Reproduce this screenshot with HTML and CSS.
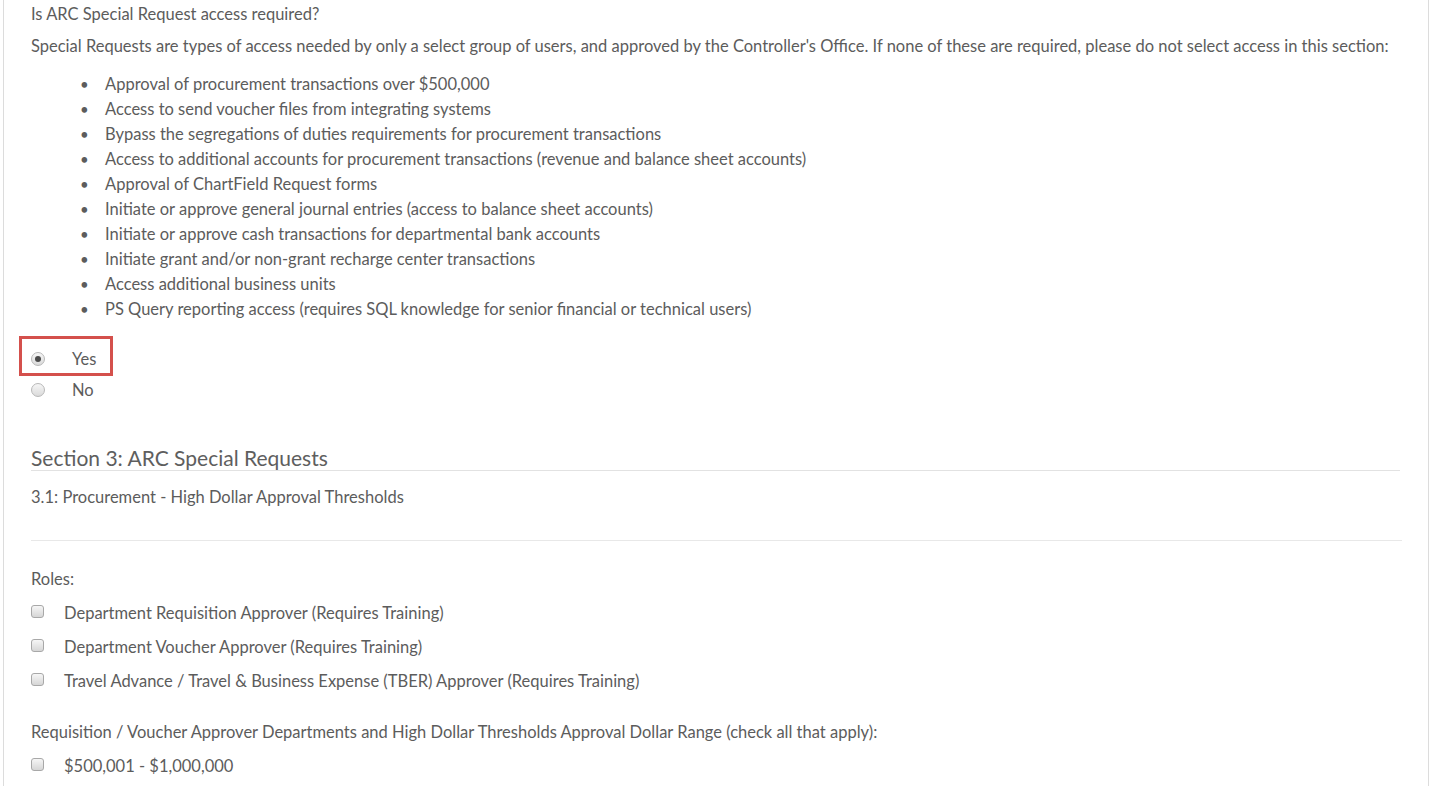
FILE: index.html
```html
<!DOCTYPE html>
<html lang="en">
<head>
    <meta charset="UTF-8">
    <title>ARC Special Requests</title>
    <link rel="stylesheet" href="styles.css">
</head>
<body>
    <div class="form-panel">
        <p class="question">Is ARC Special Request access required?</p>
        <p class="intro">Special Requests are types of access needed by only a select group of users, and approved by the Controller's Office. If none of these are required, please do not select access in this section:</p>
        <ul class="access-list">
            <li>Approval of procurement transactions over $500,000</li>
            <li>Access to send voucher files from integrating systems</li>
            <li>Bypass the segregations of duties requirements for procurement transactions</li>
            <li>Access to additional accounts for procurement transactions (revenue and balance sheet accounts)</li>
            <li>Approval of ChartField Request forms</li>
            <li>Initiate or approve general journal entries (access to balance sheet accounts)</li>
            <li>Initiate or approve cash transactions for departmental bank accounts</li>
            <li>Initiate grant and/or non-grant recharge center transactions</li>
            <li>Access additional business units</li>
            <li>PS Query reporting access (requires SQL knowledge for senior financial or technical users)</li>
        </ul>

        <div class="radio-group">
            <div class="radio-row highlighted">
                <span class="radio checked"></span>
                <span class="radio-label">Yes</span>
            </div>
            <div class="radio-row">
                <span class="radio"></span>
                <span class="radio-label">No</span>
            </div>
        </div>

        <h2 class="section-title">Section 3: ARC Special Requests</h2>
        <p class="subsection">3.1: Procurement - High Dollar Approval Thresholds</p>
        <hr class="divider">

        <p class="field-label">Roles:</p>
        <div class="check-row"><span class="checkbox"></span><span>Department Requisition Approver (Requires Training)</span></div>
        <div class="check-row"><span class="checkbox"></span><span>Department Voucher Approver (Requires Training)</span></div>
        <div class="check-row"><span class="checkbox"></span><span>Travel Advance / Travel &amp; Business Expense (TBER) Approver (Requires Training)</span></div>

        <p class="field-label range-label">Requisition / Voucher Approver Departments and High Dollar Thresholds Approval Dollar Range (check all that apply):</p>
        <div class="check-row"><span class="checkbox"></span><span>$500,001 - $1,000,000</span></div>
    </div>
</body>
</html>
```

FILE: styles.css
```css
body {
    margin: 0;
    background: #fff;
    font-family: Lato, "Open Sans", sans-serif;
    font-size: 16.5px;
    color: #5c5c5c;
}
.form-panel {
    margin: 0 2px 0 3px;
    border-left: 1px solid #dcdcdc;
    border-right: 1px solid #dcdcdc;
    padding: 3px 26px 40px 27px;
    min-height: 786px;
    box-sizing: border-box;
}
p {
    margin: 0;
}
.question {
    line-height: 22px;
}
.intro {
    margin-top: 10px;
    line-height: 22px;
}
.access-list {
    margin: 15px 0 0;
    padding-left: 74px;
    line-height: 25px;
    list-style: none;
}
.access-list li::before {
    content: "\2022";
    display: inline-block;
    width: 25px;
    margin-left: -25px;
    font-size: 15px;
}
.radio-group {
    margin-top: 21px;
}
.radio-row {
    display: flex;
    align-items: center;
    height: 31px;
    position: relative;
}
.radio-row.highlighted::before {
    content: "";
    position: absolute;
    left: -12px;
    top: -7px;
    width: 94px;
    height: 40px;
    border: 3px solid #d4504c;
    box-sizing: border-box;
}
.radio {
    width: 14px;
    height: 14px;
    border-radius: 50%;
    border: 1px solid #b8b8b8;
    background: linear-gradient(#f6f6f6, #dadada);
    box-sizing: border-box;
    position: relative;
}
.radio.checked::after {
    content: "";
    position: absolute;
    left: 3px;
    top: 3px;
    width: 6px;
    height: 6px;
    border-radius: 50%;
    background: #4a4a4a;
}
.radio-label {
    margin-left: 27px;
}
.section-title {
    margin: 41px 2px 0 0;
    font-weight: normal;
    font-size: 21px;
    line-height: 24px;
    color: #5e5e5e;
    border-bottom: 1px solid #e2e2e2;
}
.subsection {
    margin-top: 14px;
    line-height: 24px;
}
.divider {
    border: 0;
    border-top: 1px solid #e8e8e8;
    margin: 31px 0 0;
}
.field-label {
    margin-top: 26px;
    margin-bottom: 5px;
    line-height: 24px;
}
.range-label {
    margin-top: 22px;
}
.check-row {
    display: flex;
    align-items: center;
    height: 34px;
}
.checkbox {
    width: 13px;
    height: 13px;
    border: 1px solid #a8a8a8;
    border-radius: 3px;
    background: linear-gradient(#f6f6f6, #d6d6d6);
    box-sizing: border-box;
    margin-right: 20px;
    margin-top: -3px;
}
```
